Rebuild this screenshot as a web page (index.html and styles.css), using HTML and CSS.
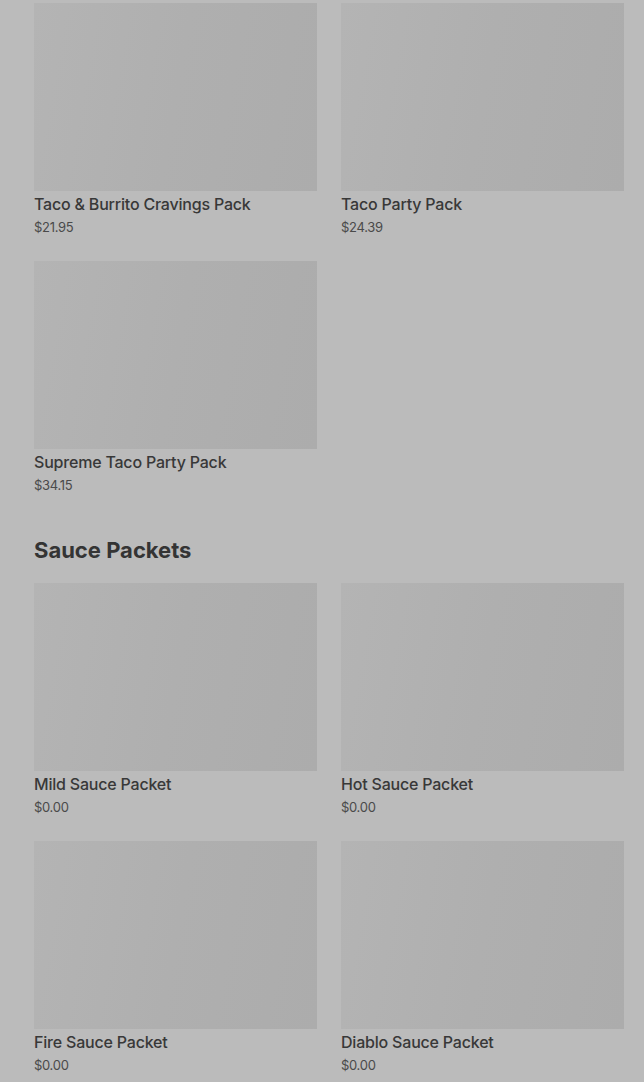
FILE: index.html
```html
<!DOCTYPE html>
<html lang="en">
<head>
<meta charset="utf-8">
<link rel="stylesheet" href="styles.css">
</head>
<body>
<main class="page">
  <section class="section">
    <div class="grid">
      <div class="card"><div class="thumb"></div><div class="name">Taco &amp; Burrito Cravings Pack</div><div class="price">$21.95</div></div>
      <div class="card"><div class="thumb"></div><div class="name">Taco Party Pack</div><div class="price">$24.39</div></div>
      <div class="card"><div class="thumb"></div><div class="name">Supreme Taco Party Pack</div><div class="price">$34.15</div></div>
    </div>
  </section>
  <section class="section">
    <h2 class="heading">Sauce Packets</h2>
    <div class="grid">
      <div class="card"><div class="thumb"></div><div class="name">Mild Sauce Packet</div><div class="price">$0.00</div></div>
      <div class="card"><div class="thumb"></div><div class="name">Hot Sauce Packet</div><div class="price">$0.00</div></div>
      <div class="card"><div class="thumb"></div><div class="name">Fire Sauce Packet</div><div class="price">$0.00</div></div>
      <div class="card"><div class="thumb"></div><div class="name">Diablo Sauce Packet</div><div class="price">$0.00</div></div>
    </div>
  </section>
</main>
</body>
</html>
```
FILE: styles.css
```css
html, body {
  margin: 0;
  padding: 0;
  background: #bbbbbb;
  font-family: Inter, "Noto Sans", sans-serif;
  color: #333333;
}
.page {
  width: 590px;
  margin-left: 34px;
  padding-top: 3px;
  display: flex;
  flex-direction: column;
  gap: 43px;
}
.grid {
  display: grid;
  grid-template-columns: 283px 283px;
  column-gap: 24px;
  row-gap: 26px;
}
.card {
  display: flex;
  flex-direction: column;
}
.thumb {
  height: 188px;
  background: linear-gradient(100deg, #b4b4b4 0%, #afafaf 50%, #acacac 100%);
}
.name {
  margin-top: 3px;
  font-size: 16px;
  line-height: 20px;
  font-weight: 500;
  color: #383838;
  letter-spacing: -0.2px;
}
.price {
  margin-top: 5px;
  font-size: 13px;
  line-height: 16px;
  color: #4a4a4a;
  letter-spacing: -0.3px;
}
.heading {
  margin: 0 0 19px 0;
  font-size: 22px;
  line-height: 28px;
  font-weight: 700;
  color: #343434;
  letter-spacing: 0;
}
```
